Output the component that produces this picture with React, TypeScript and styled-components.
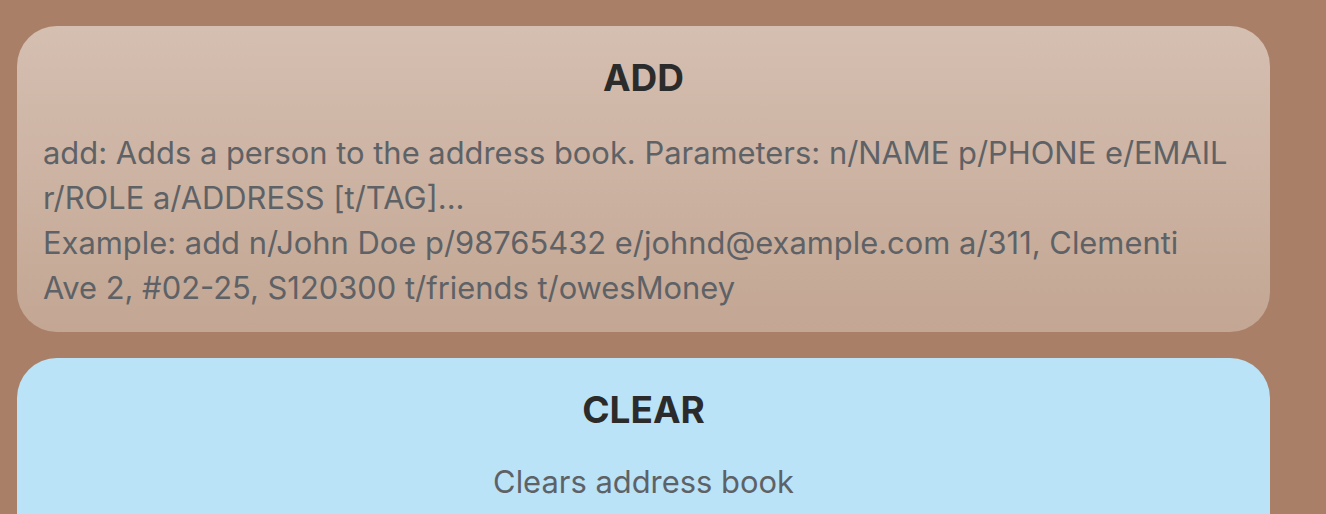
import React from "react";
import styled, { createGlobalStyle } from "styled-components";

const Global = createGlobalStyle`
  html, body { margin: 0; padding: 0; background: #a98067; }
  body { font-family: Inter, "Noto Sans", sans-serif; }
`;

const Page = styled.div`
  display: flex;
  flex-direction: column;
  gap: 26px;
  padding: 26px 56px 0 17px;
  height: 514px;
  box-sizing: border-box;
  overflow: hidden;
`;

const Card = styled.section<{ $variant: "brown" | "blue" }>`
  border-radius: 40px;
  padding: 30px 38px 22px 26px;
  background: ${(p) =>
    p.$variant === "brown"
      ? "linear-gradient(180deg, #d5bfb1 0%, #c3a693 100%)"
      : "#bbe3f8"};
  flex-shrink: 0;
  min-height: ${(p) => (p.$variant === "blue" ? "200px" : "auto")};
`;

const Title = styled.h2<{ $gap: number }>`
  margin: 0 0 ${(p) => p.$gap}px;
  text-align: center;
  font-size: 37px;
  font-weight: 700;
  color: #2b2b2b;
  line-height: 44px;
  padding-left: 12px;
`;

const Body = styled.p<{ $center?: boolean }>`
  margin: 0;
  font-size: 30.9px;
  line-height: 45px;
  color: #5e6266;
  text-align: ${(p) => (p.$center ? "center" : "left")};
  padding-left: ${(p) => (p.$center ? "12px" : "0")};
`;

export default function App() {
  return (
    <>
      <Global />
      <Page>
        <Card $variant="brown">
          <Title $gap={30}>ADD</Title>
          <Body>
            add: Adds a person to the address book. Parameters: n/NAME p/PHONE e/EMAIL
            r/ROLE a/ADDRESS [t/TAG]...
            <br />
            Example: add n/John Doe p/98765432 e/johnd@example.com a/311, Clementi
            Ave 2, #02-25, S120300 t/friends t/owesMoney
          </Body>
        </Card>
        <Card $variant="blue">
          <Title $gap={27}>CLEAR</Title>
          <Body $center>Clears address book</Body>
        </Card>
      </Page>
    </>
  );
}
